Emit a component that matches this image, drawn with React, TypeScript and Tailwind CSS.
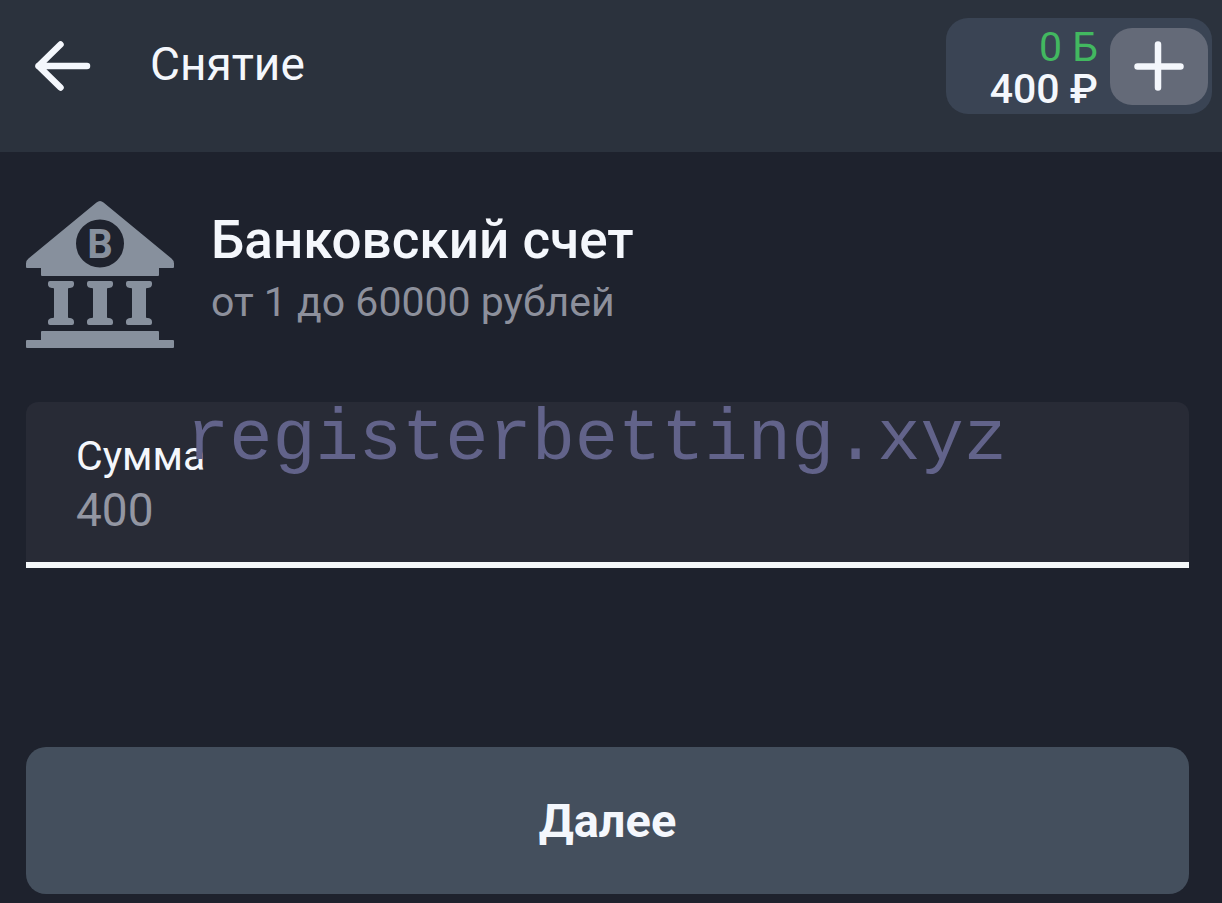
import { useState } from 'react'
import type { ReactNode } from 'react'

export default function App() {
  const [amount, setAmount] = useState('400')

  return (
    <div className="min-h-screen bg-[#1e222d] font-['Roboto',sans-serif] text-[#f4f7fc]">
      <Header title="Снятие" bonus="0 Б" balance="400 ₽" />
      <main className="pt-[49px] pr-[33px] pb-2 pl-[26px]">
        <MethodInfo icon={<BankIcon />} name="Банковский счет" limits="от 1 до 60000 рублей" />
        <form onSubmit={(e) => e.preventDefault()}>
          <div className="relative mt-[53px]">
            <div className="rounded-t-xl border-b-6 border-[#f4f7f9] bg-[#282b36] px-[50px] pt-7 pb-6">
              <label htmlFor="amount" className="block text-[41px] leading-[52px]">
                Сумма
              </label>
              <input
                id="amount"
                inputMode="numeric"
                value={amount}
                onChange={(e) => setAmount(e.target.value)}
                className="block h-14 w-full bg-transparent text-[46px] leading-[56px] text-[#9396a2] outline-none"
              />
            </div>
            <p className="pointer-events-none absolute -top-0.5 left-40 font-['Liberation_Mono',monospace] text-[72px] leading-[80px] text-[#62638a]">
              registerbetting.xyz
            </p>
          </div>
          <button
            type="submit"
            className="mt-[179px] block h-[147px] w-full rounded-[20px] bg-[#444f5d] text-[47px] leading-[56px] font-bold"
          >
            Далее
          </button>
        </form>
      </main>
    </div>
  )
}

interface HeaderProps {
  title: string
  bonus: string
  balance: string
}

function Header({ title, bonus, balance }: HeaderProps) {
  return (
    <header className="flex h-[152px] items-start justify-between bg-[#2b323d] pt-[18px] pr-[10px] pl-8">
      <div className="flex items-start pt-5">
        <button type="button" aria-label="Назад" className="mr-14">
          <ArrowIcon />
        </button>
        <h1 className="text-[46px] leading-[52px]">{title}</h1>
      </div>
      <div className="flex h-24 items-center gap-3 rounded-[22px] bg-[#3a4454] pr-1 pl-11">
        <div className="pt-1 text-right text-[41px] leading-[42px]">
          <p className="text-[#42b860]">{bonus}</p>
          <p className="font-medium">{balance}</p>
        </div>
        <button
          type="button"
          aria-label="Пополнить"
          className="flex h-[77px] w-[98px] items-center justify-center rounded-[22px] bg-[#646a78]"
        >
          <svg viewBox="0 0 50 50" className="size-[50px]" fill="none" stroke="currentColor" strokeWidth="6.5" strokeLinecap="round">
            <path d="M24 3.500v43M3.500 25.500h43" />
          </svg>
        </button>
      </div>
    </header>
  )
}

interface MethodInfoProps {
  icon: ReactNode
  name: string
  limits: string
}

function MethodInfo({ icon, name, limits }: MethodInfoProps) {
  return (
    <section className="flex items-start gap-[37px]">
      {icon}
      <div className="pt-[7px]">
        <h2 className="text-[53px] leading-[64px] font-medium">{name}</h2>
        <p className="text-[41px] leading-[60px] text-[#8d909c]">{limits}</p>
      </div>
    </section>
  )
}

function ArrowIcon() {
  return (
    <svg viewBox="0 0 62 56" className="h-14 w-[62px]" fill="none" stroke="currentColor" strokeWidth="6.5" strokeLinecap="round" strokeLinejoin="round">
      <path d="M28.500 6.500 6.500 28l22 21.500M6.500 28h48.500" />
    </svg>
  )
}

function BankIcon() {
  return (
    <svg viewBox="0 0 148 148" className="size-[148px] shrink-0" fill="#87909d" aria-hidden="true">
      <path
        fillRule="evenodd"
        d="M70.500 1.500q3.500-3 7 0l68 56q2.500 2 2.500 5v3.500q0 1-1 1h-14v7q0 1-1 1H16q-1 0-1-1v-7H1q-1 0-1-1v-3.500q0-3 2.500-5ZM74 18.500a24 24 0 1 0 0 48 24 24 0 0 0 0-48Z"
      />
      <text x="74" y="57" textAnchor="middle" className="font-['Roboto',sans-serif] text-[40px] font-bold">
        B
      </text>
      <Column x={22} />
      <Column x={61} />
      <Column x={100} />
      <path d="M16 130h116q1 0 1 1v8h14q1 0 1 1v6q0 1-1 1H1q-1 0-1-1v-6q0-1 1-1h14v-8q0-1 1-1Z" />
    </svg>
  )
}

function Column({ x }: { x: number }) {
  return (
    <path
      transform={`translate(${x} 80)`}
      d="M2 0h22q2 0 2 2v1c0 3-2 4-5 4q-1 0-1 1v28q0 1 1 1c3 0 5 1 5 4v1q0 2-2 2H2q-2 0-2-2v-1c0-3 2-4 5-4q1 0 1-1V8q0-1-1-1C2 7 0 6 0 3V2Q0 0 2 0Z"
    />
  )
}
